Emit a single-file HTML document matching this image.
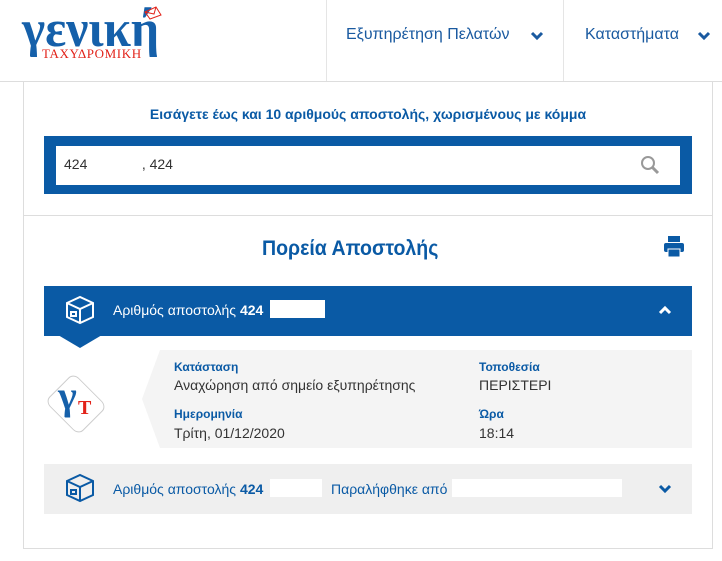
<!DOCTYPE html>
<html><head><meta charset="utf-8"><style>
*{margin:0;padding:0;box-sizing:border-box}
body{width:722px;height:561px;background:#fff;font-family:"Liberation Sans","Noto Sans CJK SC",sans-serif;position:relative;overflow:hidden;color:#333}
.a{position:absolute}
.nav{font-size:16px;color:#1a5aa0;top:26px}
.blue{color:#0a5aa5}
.lbl{font-size:12px;font-weight:bold;color:#0a5aa5}
.val{font-size:14px;color:#333}
</style></head><body>
<div class="a" style="left:0;top:0;width:722px;height:82px;border-bottom:1px solid #ddd"></div>
<div class="a" style="left:326px;top:0;width:1px;height:81px;background:#e5e5e5"></div>
<div class="a" style="left:563px;top:0;width:1px;height:81px;background:#e5e5e5"></div>
<div class="a" style="left:22px;top:8px;font-family:'Liberation Serif',serif;font-weight:bold;font-size:52px;color:#1560aa;line-height:44px;transform:scaleX(0.95);transform-origin:left">γενική</div>
<svg class="a" style="left:144px;top:6px" width="18" height="14"><path d="M1 6 L12 1 L17 9 L6 13 Z M1 6 L10 8 L12 1" fill="none" stroke="#e2231a" stroke-width="1"/></svg>
<div class="a" style="left:42px;top:46px;font-family:'Liberation Serif',serif;font-size:13px;color:#e2231a;letter-spacing:0.6px">ΤΑΧΥΔΡΟΜΙΚΗ</div>
<div class="a nav" style="left:346px">Εξυπηρέτηση Πελατών</div>
<svg class="a" style="left:530px;top:31px" width="14" height="10"><path d="M2 2 L7 7 L12 2" fill="none" stroke="#1a5aa0" stroke-width="3"/></svg>
<div class="a nav" style="left:585px">Καταστήματα</div>
<svg class="a" style="left:697px;top:31px" width="14" height="10"><path d="M2 2 L7 7 L12 2" fill="none" stroke="#1a5aa0" stroke-width="3"/></svg>
<div class="a" style="left:23px;top:82px;width:690px;height:467px;border:1px solid #ddd;border-top:none"></div>
<div class="a blue" style="left:0;width:736px;text-align:center;top:106px;font-size:14px;font-weight:bold">Εισάγετε έως και 10 αριθμούς αποστολής, χωρισμένους με κόμμα</div>
<div class="a" style="left:44px;top:136px;width:648px;height:58px;background:#0a5aa5"></div>
<div class="a" style="left:56px;top:146px;width:624px;height:39px;background:#fff"></div>
<div class="a" style="left:64px;top:156px;font-size:14px">424&nbsp;&nbsp;&nbsp;&nbsp;&nbsp;&nbsp;&nbsp;&nbsp;&nbsp;&nbsp;&nbsp;&nbsp;&nbsp;&nbsp;, 424</div>
<svg class="a" style="left:640px;top:155px" width="22" height="22"><circle cx="8" cy="8" r="6" fill="none" stroke="#999" stroke-width="2"/><line x1="12" y1="12" x2="18" y2="18" stroke="#999" stroke-width="3"/></svg>
<div class="a" style="left:24px;top:215px;width:688px;height:1px;background:#ddd"></div>
<div class="a blue" style="left:262px;top:237px;font-size:21px;font-weight:bold;transform:scaleX(0.93);transform-origin:left">Πορεία Αποστολής</div>
<svg class="a" style="left:664px;top:236px" width="20" height="22"><rect x="4" y="0" width="12" height="6" fill="#0a5aa5"/><rect x="0" y="7" width="20" height="9" rx="2" fill="#0a5aa5"/><rect x="4" y="13" width="12" height="8" fill="#0a5aa5" stroke="#fff" stroke-width="1"/></svg>
<div class="a" style="left:44px;top:286px;width:648px;height:50px;background:#0a5aa5"></div>
<div class="a" style="left:58px;top:335px;width:0;height:0;border-left:22px solid transparent;border-right:22px solid transparent;border-top:13px solid #0a5aa5"></div>
<svg class="a" style="left:64px;top:294px" width="32" height="32" fill="none" stroke="#fff" stroke-width="2"><path d="M3 9 L16 3 L29 9 L29 23 L16 29 L3 23 Z M3 9 L16 15 L29 9 M16 15 L16 29"/><rect x="7" y="18" width="5" height="4"/></svg>
<div class="a" style="left:113px;top:302px;font-size:14px;color:#fff">Αριθμός αποστολής <b>424</b></div>
<div class="a" style="left:270px;top:300px;width:55px;height:18px;background:#fff"></div>
<svg class="a" style="left:658px;top:305px" width="14" height="10"><path d="M2 8 L7 3 L12 8" fill="none" stroke="#fff" stroke-width="3"/></svg>
<div class="a" style="left:142px;top:350px;width:550px;height:98px;background:#f4f4f4;clip-path:polygon(18px 0,100% 0,100% 100%,18px 100%,0 50%)"></div>
<div class="a" style="left:52px;top:380px;width:48px;height:48px;border:1px solid #ccc;transform:rotate(45deg) scaleY(0.85);border-radius:8px;background:#fff"></div>
<div class="a" style="left:58px;top:372px;font-family:'Liberation Serif',serif;font-size:40px;font-weight:bold;color:#1560aa">γ</div>
<div class="a" style="left:78px;top:397px;font-family:'Liberation Serif',serif;font-size:20px;font-weight:bold;color:#e2231a">T</div>
<div class="a lbl" style="left:174px;top:360px">Κατάσταση</div>
<div class="a val" style="left:174px;top:377px">Αναχώρηση από σημείο εξυπηρέτησης</div>
<div class="a lbl" style="left:174px;top:407px">Ημερομηνία</div>
<div class="a val" style="left:174px;top:425px">Τρίτη, 01/12/2020</div>
<div class="a lbl" style="left:479px;top:360px">Τοποθεσία</div>
<div class="a val" style="left:479px;top:377px">ΠΕΡΙΣΤΕΡΙ</div>
<div class="a lbl" style="left:479px;top:407px">Ώρα</div>
<div class="a val" style="left:479px;top:425px">18:14</div>
<div class="a" style="left:44px;top:464px;width:648px;height:50px;background:#efefef"></div>
<svg class="a" style="left:64px;top:472px" width="32" height="32" fill="none" stroke="#0a5aa5" stroke-width="2"><path d="M3 9 L16 3 L29 9 L29 23 L16 29 L3 23 Z M3 9 L16 15 L29 9 M16 15 L16 29"/><rect x="7" y="18" width="5" height="4"/></svg>
<div class="a" style="left:113px;top:481px;font-size:14px;color:#0a5aa5">Αριθμός αποστολής <b>424</b></div>
<div class="a" style="left:270px;top:479px;width:52px;height:18px;background:#fff"></div>
<div class="a" style="left:331px;top:481px;font-size:14px;color:#0a5aa5">Παραλήφθηκε από</div>
<div class="a" style="left:452px;top:479px;width:170px;height:18px;background:#fff"></div>
<svg class="a" style="left:658px;top:484px" width="14" height="10"><path d="M2 2 L7 7 L12 2" fill="none" stroke="#0a5aa5" stroke-width="3"/></svg>
</body></html>
